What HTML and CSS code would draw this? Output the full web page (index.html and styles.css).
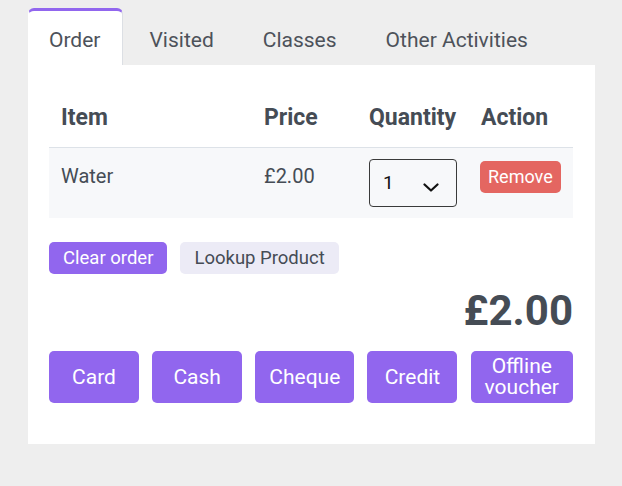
FILE: index.html
```html
<!DOCTYPE html>
<html lang="en">
<head>
    <meta charset="UTF-8">
    <meta name="viewport" content="width=device-width, initial-scale=1.0">
    <title>Till - Order</title>
    <link rel="stylesheet" href="styles.css">
</head>
<body>
    <div class="panel">
        <nav class="tabs">
            <div class="tab active">Order</div>
            <div class="tab">Visited</div>
            <div class="tab">Classes</div>
            <div class="tab">Other Activities</div>
        </nav>
        <div class="card">
            <table class="order-table">
                <colgroup>
                    <col class="col-item">
                    <col class="col-price">
                    <col class="col-qty">
                    <col class="col-action">
                </colgroup>
                <thead>
                    <tr>
                        <th>Item</th>
                        <th>Price</th>
                        <th>Quantity</th>
                        <th>Action</th>
                    </tr>
                </thead>
                <tbody>
                    <tr>
                        <td>Water</td>
                        <td>£2.00</td>
                        <td class="qty-cell">
                            <div class="qty">
                                <span>1</span>
                                <svg class="chevron" width="16" height="9" viewBox="0 0 16 9">
                                    <path d="M1.5 1.5 L8 7.5 L14.5 1.5" fill="none" stroke="#111" stroke-width="2.2" stroke-linecap="round" stroke-linejoin="round"/>
                                </svg>
                            </div>
                        </td>
                        <td><button class="btn-remove">Remove</button></td>
                    </tr>
                </tbody>
            </table>

            <div class="order-actions">
                <button class="btn-small purple">Clear order</button>
                <button class="btn-small light">Lookup Product</button>
            </div>

            <div class="total">£2.00</div>

            <div class="pay">
                <button class="btn-pay">Card</button>
                <button class="btn-pay">Cash</button>
                <button class="btn-pay">Cheque</button>
                <button class="btn-pay">Credit</button>
                <button class="btn-pay">Offline<br>voucher</button>
            </div>
        </div>
    </div>
</body>
</html>
```

FILE: styles.css
```css
body {
    margin: 0;
    background-color: #eeeeee;
    font-family: Roboto, "Noto Sans", sans-serif;
    color: #454c55;
}
.panel {
    width: 567px;
    margin: 8px 0 0 28px;
}

/* tabs */
.tabs {
    display: flex;
    gap: 5px;
}
.tab {
    padding: 14px 22px 10px 20px;
    font-size: 21px;
    line-height: 30px;
    color: #4d525a;
    border: 1px solid transparent;
    border-top: 3px solid transparent;
    border-bottom: 0;
}
.tab.active {
    background-color: #fff;
    border-color: #9166ee #dcdfe4 transparent transparent;
    border-top-left-radius: 6px;
    border-top-right-radius: 6px;
}

.card {
    background-color: #fff;
    padding: 25px 22px 41px 21px;
}

/* order table */
.order-table {
    width: 100%;
    border-collapse: collapse;
    table-layout: fixed;
}
.col-item { width: 203px; }
.col-price { width: 105px; }
.col-qty { width: 112px; }
.col-action { width: 104px; }
.order-table th {
    text-align: left;
    font-size: 23px;
    font-weight: 700;
    line-height: 30px;
    padding: 13px 12px 14px;
    border-bottom: 1px solid #dde2e8;
}
.order-table td {
    vertical-align: top;
    font-size: 20px;
    line-height: 30px;
    padding: 13px 12px 11px;
    background-color: #f7f8fa;
}
.order-table td.qty-cell {
    padding-top: 11px;
}
.qty {
    box-sizing: border-box;
    width: 88px;
    height: 48px;
    border: 1px solid #3a3a3a;
    border-radius: 4px;
    display: flex;
    align-items: center;
    justify-content: space-between;
    padding: 0 17px 0 13px;
    font-size: 19px;
    color: #111;
}
.chevron {
    margin-top: 9px;
}
.btn-remove {
    font-family: inherit;
    font-size: 18px;
    line-height: 28px;
    padding: 2px 8px;
    margin-left: -1px;
    border: none;
    border-radius: 5px;
    background-color: #e46661;
    color: #fff;
}

/* buttons under the table */
.order-actions {
    display: flex;
    gap: 13px;
    margin-top: 24px;
}
.btn-small {
    font-family: inherit;
    font-size: 18.5px;
    height: 32px;
    padding: 0 14px;
    border: none;
    border-radius: 5px;
}
.btn-small.purple {
    background-color: #9166ee;
    color: #fff;
}
.btn-small.light {
    background-color: #ecebf6;
    color: #454c55;
}

.total {
    margin-top: 12px;
    text-align: right;
    font-size: 42px;
    font-weight: 700;
    line-height: 50px;
}

/* payment buttons */
.pay {
    display: flex;
    justify-content: space-between;
    margin-top: 15px;
}
.btn-pay {
    font-family: inherit;
    font-size: 21px;
    line-height: 21px;
    height: 52px;
    min-width: 90px;
    padding: 0 14px;
    border: none;
    border-radius: 5px;
    background-color: #9166ee;
    color: #fff;
}
```
